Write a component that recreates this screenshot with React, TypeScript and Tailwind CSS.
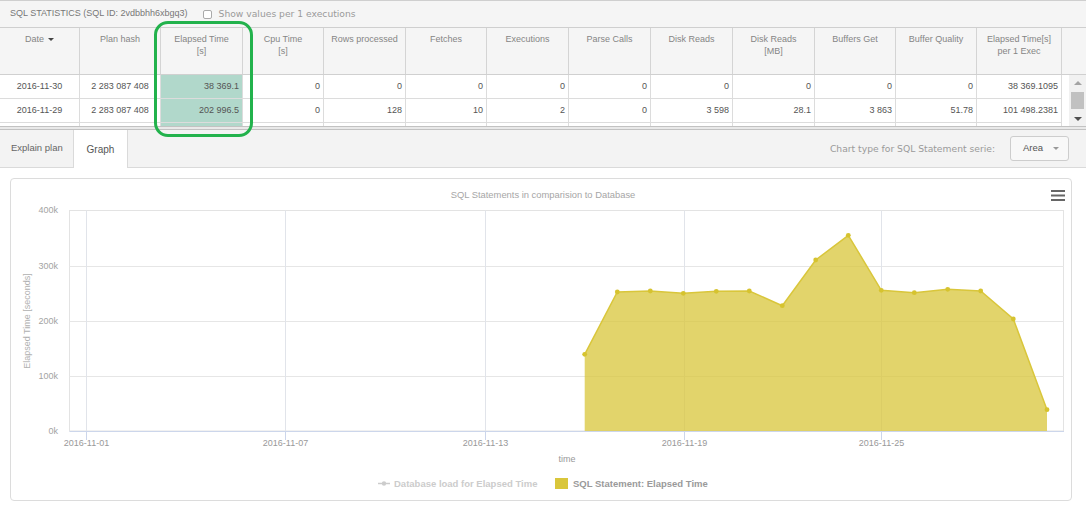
import React from "react";

const GRID =
  "grid grid-cols-[80px_81px_82px_81px_82px_81px_82px_82px_82px_82px_81px_81px_85px]";

const headers: [string, string?][] = [
  ["Date"],
  ["Plan hash"],
  ["Elapsed Time", "[s]"],
  ["Cpu Time", "[s]"],
  ["Rows processed"],
  ["Fetches"],
  ["Executions"],
  ["Parse Calls"],
  ["Disk Reads"],
  ["Disk Reads", "[MB]"],
  ["Buffers Get"],
  ["Buffer Quality"],
  ["Elapsed Time[s]", "per 1 Exec"],
];

const rows: string[][] = [
  ["2016-11-30", "2 283 087 408", "38 369.1", "0", "0", "0", "0", "0", "0", "0", "0", "0", "38 369.1095"],
  ["2016-11-29", "2 283 087 408", "202 996.5", "0", "128", "10", "2", "0", "3 598", "28.1", "3 863", "51.78", "101 498.2381"],
  ["", "", "", "", "", "", "", "", "", "", "", "", ""],
];

const pts: [number, number][] = [
  [584.7, 354.3],
  [617.3, 292],
  [650.3, 291],
  [683.3, 293.3],
  [716.3, 291.3],
  [749.3, 291],
  [782.3, 305.7],
  [815.7, 260],
  [848.3, 235.3],
  [881.3, 290.3],
  [914.3, 292.7],
  [947.7, 289.3],
  [980.7, 291],
  [1013.3, 319],
  [1047, 409.7],
];

function Chart() {
  const line = pts.map((p) => p.join(",")).join(" ");
  const area = `584.7,431 ${line} 1047,431`;
  const xTicks: [number, string][] = [
    [86, "2016-11-01"],
    [285, "2016-11-07"],
    [485, "2016-11-13"],
    [684, "2016-11-19"],
    [881, "2016-11-25"],
  ];
  const yTicks: [number, string][] = [
    [210, "400k"],
    [266, "300k"],
    [321, "200k"],
    [376, "100k"],
    [431, "0k"],
  ];
  return (
    <svg
      width={1060}
      height={321}
      viewBox="11 179 1060 321"
      className="block"
      style={{ fontFamily: '"Liberation Sans", Arial, sans-serif' }}
    >
      <text x={543} y={198} textAnchor="middle" fontSize={9.4} fill="#a6a6a6">
        SQL Statements in comparision to Database
      </text>
      <rect x={1051} y={190} width={14} height={2} fill="#666" />
      <rect x={1051} y={194.5} width={14} height={2} fill="#666" />
      <rect x={1051} y={199} width={14} height={2} fill="#666" />

      <rect x={69.5} y={210.5} width={994} height={220.5} fill="#fff" stroke="#e3e3e3" />
      {yTicks.slice(1, 4).map(([y]) => (
        <line key={y} x1={69.5} x2={1064} y1={y + 0.5} y2={y + 0.5} stroke="#e6e6e6" />
      ))}
      {xTicks.map(([x]) => (
        <line key={x} x1={x + 0.5} x2={x + 0.5} y1={210.5} y2={431} stroke="#e1e4ea" />
      ))}

      <polygon points={area} fill="#d8c53a" fillOpacity={0.75} />
      <polyline points={line} fill="none" stroke="#d9c63b" strokeWidth={1.5} />
      {pts.map(([x, y], i) => (
        <circle key={i} cx={x} cy={y} r={2.4} fill="#d6c32f" />
      ))}

      <line x1={69.5} x2={1064} y1={431.5} y2={431.5} stroke="#ccd6eb" />
      {xTicks.map(([x, t]) => (
        <g key={t}>
          <line x1={x + 0.5} x2={x + 0.5} y1={431.5} y2={440} stroke="#ccd6eb" />
          <text x={x + 0.5} y={446} textAnchor="middle" fontSize={9} fill="#999">
            {t}
          </text>
        </g>
      ))}
      {yTicks.map(([y, t]) => (
        <text key={t} x={58} y={y + 3} textAnchor="end" fontSize={9} fill="#a3a3a3">
          {t}
        </text>
      ))}
      <text
        transform="translate(30,321) rotate(-90)"
        textAnchor="middle"
        fontSize={9}
        fill="#b0b0b0"
      >
        Elapsed Time [seconds]
      </text>
      <text x={567} y={462} textAnchor="middle" fontSize={9} fill="#999">
        time
      </text>

      <line x1={378} x2={390} y1={483.5} y2={483.5} stroke="#ccc" strokeWidth={1.5} />
      <circle cx={384} cy={483.5} r={2.2} fill="#ccc" />
      <text x={394} y={486.5} fontSize={9.5} fontWeight="bold" fill="#cccccc">
        Database load for Elapsed Time
      </text>
      <rect x={555} y={478} width={13} height={11} fill="#d9c63b" />
      <text x={573} y={486.5} fontSize={9.5} fontWeight="bold" fill="#9a9a9a">
        SQL Statement: Elapsed Time
      </text>
    </svg>
  );
}

export default function App() {
  return (
    <div
      className="relative w-[1086px] h-[510px] overflow-hidden bg-white"
      style={{ fontFamily: '"Liberation Sans", Arial, sans-serif' }}
    >
      {/* Title bar */}
      <div className="h-[28px] border-t border-b border-[#cfcfcf] bg-[#f5f5f5] flex items-center pl-[10px]">
        <span className="text-[9px] text-[#777]">SQL STATISTICS (SQL ID: 2vdbbhh6xbgq3)</span>
        <span className="ml-[15px] w-[9px] h-[9px] border border-[#aaa] rounded-[2px] bg-white" />
        <span
          className="ml-[7px] text-[9.2px] text-[#9a9a9a]"
          style={{ fontFamily: '"DejaVu Sans", Verdana, sans-serif' }}
        >
          Show values per 1 executions
        </span>
      </div>

      {/* Header */}
      <div className="h-[47px] flex bg-[#f5f5f5] border-b border-[#d0d0d0]">
        <div className={GRID}>
          {headers.map(([a, b], i) => (
            <div
              key={i}
              className="border-r border-[#d4d4d4] pt-[5px] text-center text-[9px] leading-[12px] text-[#858585]"
            >
              <div className="flex items-center justify-center gap-[4px]">
                <span>{a}</span>
                {i === 0 && (
                  <span className="w-0 h-0 border-l-[3px] border-r-[3px] border-t-[3px] border-l-transparent border-r-transparent border-t-[#444]" />
                )}
              </div>
              {b && <div>{b}</div>}
            </div>
          ))}
        </div>
        <div className="flex-1" />
      </div>

      {/* Body */}
      <div className="h-[51px] flex">
        <div className="w-[1062px] overflow-hidden">
          {rows.map((r, ri) => (
            <div key={ri} className={`${GRID} h-[24px] border-b border-[#dcdcdc]`}>
              {r.map((c, ci) => (
                <div
                  key={ci}
                  className={
                    "border-r border-[#dcdcdc] flex items-center text-[9px] text-[#555] " +
                    (ci < 2 ? "justify-center " : "justify-end pr-[3px] ") +
                    (ci === 2 ? "bg-[#b1d8cb]" : "bg-white")
                  }
                >
                  {c}
                </div>
              ))}
            </div>
          ))}
        </div>
        <div className="w-[7px]" />
        <div className="w-[17px] bg-[#f1f1f1] flex flex-col items-center">
          <span className="mt-[6px] w-0 h-0 border-l-[4px] border-r-[4px] border-b-[4px] border-l-transparent border-r-transparent border-b-[#a3a3a3]" />
          <span className="mt-[7px] w-[13px] h-[17px] bg-[#c1c1c1]" />
          <span className="mt-[8px] w-0 h-0 border-l-[4px] border-r-[4px] border-t-[4px] border-l-transparent border-r-transparent border-t-[#505050]" />
        </div>
      </div>

      {/* Separator */}
      <div className="h-[4px] border-t border-b border-[#c2c2c2] bg-[#e9e9e9]" />

      {/* Tabs */}
      <div className="h-[38px] flex bg-[#f3f3f3]">
        <div className="w-[74px] border-r border-b border-[#dadada] flex items-center pl-[11px] text-[9.5px] text-[#666]">
          Explain plan
        </div>
        <div className="w-[54px] border-r border-[#dadada] bg-white flex items-center justify-center text-[10px] text-[#555]">
          Graph
        </div>
        <div className="flex-1 border-b border-[#dadada] flex items-center justify-end pr-[17px]">
          <span
            className="text-[9.2px] text-[#9a9a9a] mr-[15px]"
            style={{ fontFamily: '"DejaVu Sans", Verdana, sans-serif' }}
          >
            Chart type for SQL Statement serie:
          </span>
          <div className="w-[59px] h-[25px] border border-[#cdcdcd] rounded-[3px] bg-[#f8f8f8] flex items-center pl-[12px] text-[9.5px] text-[#555]">
            <span>Area</span>
            <span className="ml-[10px] w-0 h-0 border-l-[3px] border-r-[3px] border-t-[3px] border-l-transparent border-r-transparent border-t-[#999]" />
          </div>
        </div>
      </div>

      {/* Chart card */}
      <div className="pl-[10px] pt-[10px]">
        <div className="w-[1062px] h-[323px] border border-[#dcdcdc] rounded-[4px] bg-white overflow-hidden">
          <Chart />
        </div>
      </div>

      {/* Highlight ring */}
      <div className="absolute left-[154px] top-[21px] w-[99px] h-[116px] border-[3px] border-[#22b24c] rounded-[14px] pointer-events-none" />
    </div>
  );
}
